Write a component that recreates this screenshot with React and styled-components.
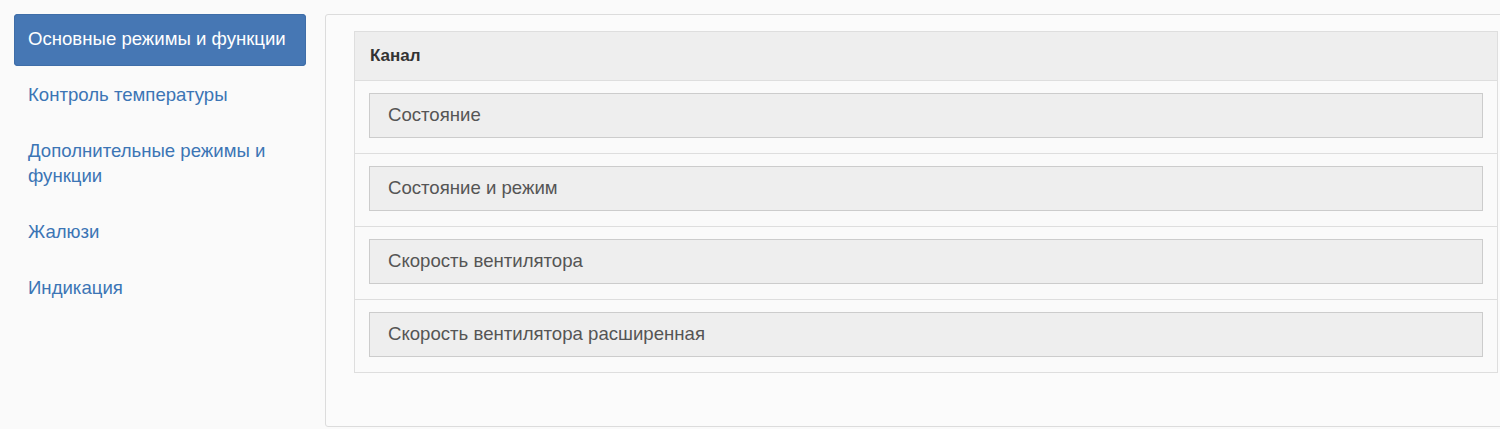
import React from "react";
import styled, { createGlobalStyle } from "styled-components";

const Global = createGlobalStyle`
  html, body { margin: 0; padding: 0; overflow: hidden; }
  body {
    background: #fafafa;
    font-family: "Liberation Sans", Arial, sans-serif;
    color: #333;
  }
`;

const Page = styled.div`
  display: flex;
  align-items: flex-start;
  gap: 19px;
  padding: 14px 0 0 14px;
  width: 1600px;
`;

const Nav = styled.nav`
  width: 292px;
  flex: none;
  display: flex;
  flex-direction: column;
  gap: 4px;
`;

const NavItem = styled.a`
  display: block;
  padding: 12px 14px 15px;
  font-size: 18.6px;
  line-height: 25px;
  border-radius: 4px;
  text-decoration: none;
  cursor: pointer;
  color: ${(p) => (p.$active ? "#fff" : "#3c75b5")};
  background: ${(p) => (p.$active ? "#4677b4" : "transparent")};
  box-shadow: ${(p) => (p.$active ? "inset 0 0 0 1px #3f6ea8" : "none")};
`;

const Panel = styled.section`
  width: 1144px;
  flex: none;
  background: #fbfbfb;
  border: 1px solid #dcdcdc;
  border-radius: 3px;
  padding: 16px 28px 53px;
`;

const Table = styled.div`
  border: 1px solid #dedede;
  background: #fafafa;
`;

const HeaderRow = styled.div`
  height: 48px;
  display: flex;
  align-items: center;
  padding: 0 15px;
  background: #eeeeee;
  border-bottom: 1px solid #dedede;
  font-size: 17px;
  font-weight: bold;
  color: #333;
`;

const Row = styled.div`
  padding: 12px 14px 15px;
  border-top: ${(p) => (p.$first ? "none" : "1px solid #dedede")};
`;

const Cell = styled.div`
  box-sizing: border-box;
  height: 45px;
  display: flex;
  align-items: center;
  padding: 0 18px 2px;
  background: #eeeeee;
  border: 1px solid #cccccc;
  font-size: 18.6px;
  color: #555;
`;

const navItems = [
  "Основные режимы и функции",
  "Контроль температуры",
  "Дополнительные режимы и функции",
  "Жалюзи",
  "Индикация",
];

const rows = [
  "Состояние",
  "Состояние и режим",
  "Скорость вентилятора",
  "Скорость вентилятора расширенная",
];

export default function App() {
  return (
    <>
      <Global />
      <Page>
        <Nav>
          {navItems.map((t, i) => (
            <NavItem key={t} $active={i === 0}>
              {t}
            </NavItem>
          ))}
        </Nav>
        <Panel>
          <Table>
            <HeaderRow>Канал</HeaderRow>
            {rows.map((r, i) => (
              <Row key={r} $first={i === 0}>
                <Cell>{r}</Cell>
              </Row>
            ))}
          </Table>
        </Panel>
      </Page>
    </>
  );
}
